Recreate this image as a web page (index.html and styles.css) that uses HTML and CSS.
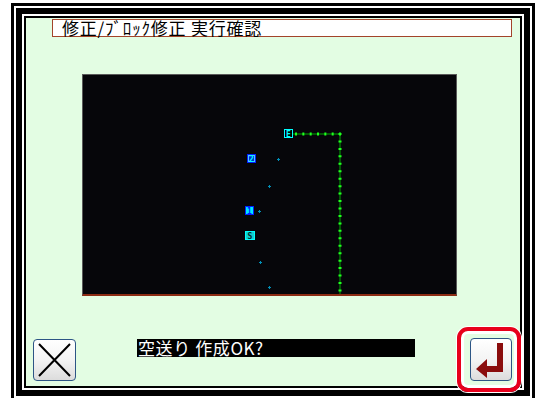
FILE: index.html
```html
<!DOCTYPE html>
<html lang="ja">
<head>
  <meta charset="UTF-8">
  <title>修正/ブロック修正 実行確認</title>
  <link rel="stylesheet" href="styles.css">
</head>
<body>

<div class="frame">
  <div class="frame-mid">
    <div class="frame-in">
      <div class="screen">
        <div class="title">修正/ﾌﾞﾛｯｸ修正 実行確認</div>

        <div class="canvas">
          <svg width="373" height="219" viewBox="0 0 373 219">
            <!-- stitch path -->
            <path d="M210 59 H257 V219" fill="none" stroke="#00a800" stroke-width="1"/>
            <path d="M258 59 H209" fill="none" stroke="#20ff20" stroke-width="3" stroke-dasharray="2 5.33"/>
            <path d="M257 58 V219" fill="none" stroke="#20ff20" stroke-width="3" stroke-dasharray="2 5.45"/>

            <!-- needle points -->
            <g fill="#0090b8">
              <rect x="194" y="84" width="3" height="1"/><rect x="195" y="83" width="1" height="3"/>
              <rect x="185" y="111" width="3" height="1"/><rect x="186" y="110" width="1" height="3"/>
              <rect x="175" y="136" width="3" height="1"/><rect x="176" y="135" width="1" height="3"/>
              <rect x="176" y="187" width="3" height="1"/><rect x="177" y="186" width="1" height="3"/>
              <rect x="185" y="212" width="3" height="1"/><rect x="186" y="211" width="1" height="3"/>
            </g>

            <!-- markers -->
            <g class="mark">
              <rect x="201" y="54" width="9" height="9" fill="#00ffff"/>
              <rect x="202" y="55" width="7" height="7" fill="#000"/>
              <text x="205.5" y="61.5" fill="#00ffff">E</text>
            </g>
            <g class="mark">
              <rect x="164" y="79" width="9" height="9" fill="#0020ff"/>
              <rect x="165" y="80" width="7" height="7" fill="#50c8ff"/>
              <rect x="166" y="81" width="5" height="5" fill="#0030d0"/>
              <text x="168.5" y="86.5" fill="#00ffff">2</text>
            </g>
            <g class="mark">
              <rect x="162" y="131" width="9" height="9" fill="#0020ff"/>
              <rect x="163" y="132" width="7" height="7" fill="#00e8ff"/>
              <text x="166.5" y="138.5" fill="#0020ff">1</text>
            </g>
            <g class="mark">
              <rect x="162" y="156" width="10" height="9" fill="#00ffff"/>
              <rect x="163" y="157" width="8" height="7" fill="#10d0d0"/>
              <text x="167" y="163.5" fill="#003030">S</text>
            </g>
          </svg>
        </div>

        <div class="bottom">
          <button class="btn btn-cancel" type="button">
            <svg width="41" height="40" viewBox="0 0 41 40">
              <path d="M5 4 L36 36 M36 4 L5 36" stroke="#000" stroke-width="2" fill="none"/>
            </svg>
          </button>

          <div class="message">空送り 作成OK?</div>

          <button class="btn btn-enter" type="button">
            <span class="focus-ring"></span>
            <svg width="40" height="41" viewBox="0 0 40 41">
              <path d="M26 4 H32 V33 H16 V39 L5 30 L16 20 V27 H26 Z" fill="#8a0c0c"/>
            </svg>
          </button>
        </div>
      </div>
    </div>
  </div>
</div>

</body>
</html>
```

FILE: styles.css
```css
html, body {
  margin: 0;
  overflow: hidden;
  background: #fff;
}
.frame {
  display: inline-block;
  margin: 3px 0 0 11px;
  border: 3px solid #000;
  padding: 2px;
  background: #fff;
}
.frame-mid {
  border: 6px solid #000;
  padding: 2px;
  background: #fff;
}
.frame-in {
  border: 2px solid #000;
}
.screen {
  width: 494px;
  height: 368px;
  background: #e3fde3;
  display: flex;
  flex-direction: column;
}
.title {
  margin: 1px 8px 0 26px;
  height: 18px;
  box-sizing: border-box;
  border: 1px solid #a3442a;
  background: #fff;
  padding-left: 9px;
  font-family: "Noto Sans CJK JP", sans-serif;
  font-size: 17px;
  line-height: 16px;
  letter-spacing: 0.8px;
  color: #000;
  white-space: nowrap;
}
.canvas {
  margin: 37px 0 0 56px;
  width: 375px;
  height: 222px;
  box-sizing: border-box;
  border: 1px solid #5a5a5a;
  border-bottom: 2px solid #8c2c14;
  background: #06060a;
}
.canvas svg {
  display: block;
}
.mark text {
  font-family: "DejaVu Sans Mono", monospace;
  font-weight: bold;
  font-size: 8px;
  text-anchor: middle;
}
.bottom {
  margin-top: 42px;
  display: flex;
  align-items: flex-start;
}
.btn {
  position: relative;
  padding: 0;
  box-sizing: border-box;
  border: 1px solid #2d5585;
  border-radius: 4px;
  background: linear-gradient(#ffffff, #f4f4f4 50%, #dcdcdc);
  display: flex;
  align-items: center;
  justify-content: center;
}
.btn-cancel {
  margin: 1px 0 0 7px;
  width: 43px;
  height: 42px;
}
.message {
  margin: 1px 0 0 61px;
  width: 278px;
  height: 18px;
  background: #000;
  color: #fff;
  font-family: "Noto Sans CJK JP", sans-serif;
  font-size: 17px;
  line-height: 18px;
  letter-spacing: 0.6px;
  padding-left: 1px;
  box-sizing: border-box;
  white-space: nowrap;
}
.btn-enter {
  margin-left: 55px;
  width: 42px;
  height: 43px;
}
.focus-ring {
  position: absolute;
  left: -14px;
  top: -12px;
  right: -10px;
  bottom: -12px;
  border: 4px solid #e8001c;
  border-radius: 11px;
  box-shadow: inset 0 0 0 3px #fff, 0 0 0 1px #fff;
  pointer-events: none;
}
```
